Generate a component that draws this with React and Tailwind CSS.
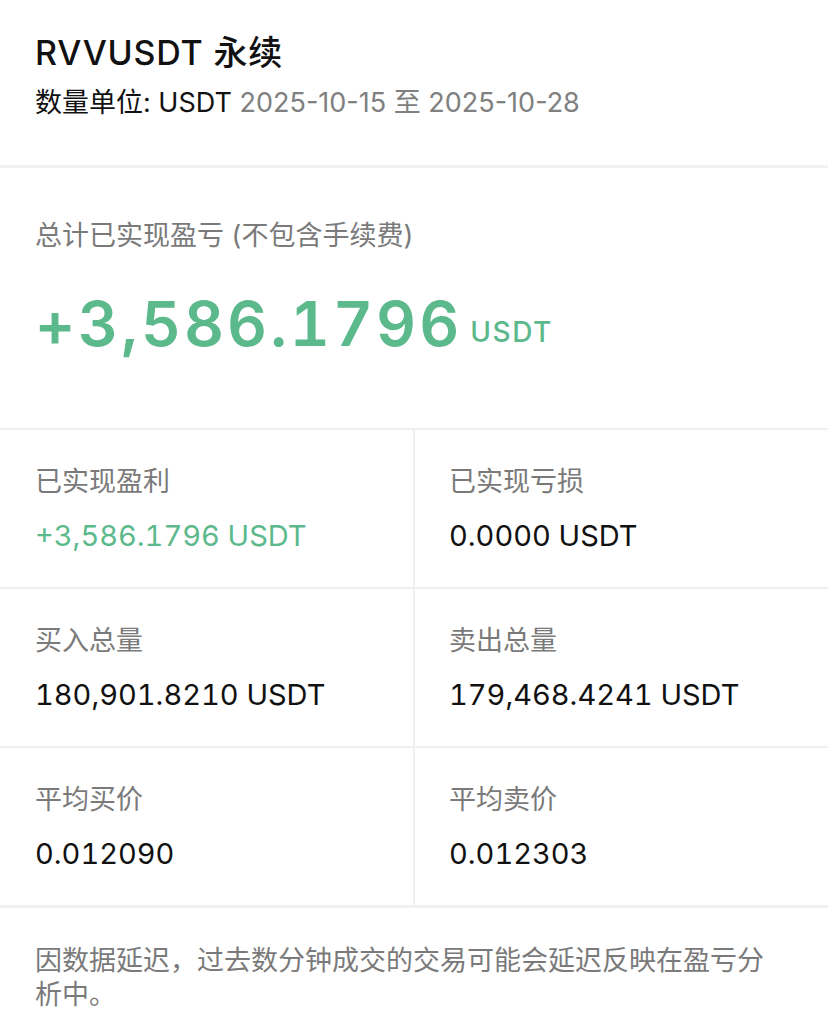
import React from "react";

const font = { fontFamily: '"Inter", "Noto Sans CJK SC", sans-serif' };

function Cell({ label, value, green, right }) {
  return (
    <div className={`h-[157px] flex flex-col pt-[35px] ${right ? "pl-[34px]" : "pl-[35px] border-r-2 border-[#f0f0f0]"}`}>
      <div className="text-[27px] leading-[34px] text-[#7a7a7a]">{label}</div>
      <div className={`mt-[19px] text-[29px] leading-[36px] tabular-nums ${green ? "text-[#5cb98c]" : "text-[#111]"}`}>{value}</div>
    </div>
  );
}

export default function App() {
  return (
    <div className="w-[828px] h-[1023px] bg-white overflow-hidden" style={font}>
      <div className="h-[168px] px-[35px] pt-[32px] border-b-[3px] border-[#f2f2f2]">
        <div className="text-[34px] leading-[42px] font-medium tracking-[0.8px] text-[#111]">RVVUSDT 永续</div>
        <div className="mt-[12px] text-[27px] leading-[34px]">
          <span className="text-[#111]">数量单位: USDT</span>
          <span className="text-[#808080]"> 2025-10-15 至 2025-10-28</span>
        </div>
      </div>
      <div className="h-[262px] px-[35px] pt-[50px] border-b-2 border-[#f0f0f0]">
        <div className="text-[27px] leading-[36px] text-[#7a7a7a]">总计已实现盈亏 (不包含手续费)</div>
        <div className="mt-[30px] flex items-baseline text-[#5cb98c]">
          <span className="text-[62px] leading-[80px] font-semibold tabular-nums tracking-[3px]">+3,586.1796</span>
          <span className="relative -top-[4px] ml-[8px] text-[28px] font-medium tracking-[1.5px]">USDT</span>
        </div>
      </div>
      <div>
        <div className="grid grid-cols-[415px_1fr] border-b-2 border-[#f0f0f0]">
          <Cell label="已实现盈利" value="+3,586.1796 USDT" green />
          <Cell label="已实现亏损" value="0.0000 USDT" right />
        </div>
        <div className="grid grid-cols-[415px_1fr] border-b-2 border-[#f0f0f0]">
          <Cell label="买入总量" value="180,901.8210 USDT" />
          <Cell label="卖出总量" value="179,468.4241 USDT" right />
        </div>
        <div className="grid grid-cols-[415px_1fr] border-b-[3px] border-[#f0f0f0]">
          <Cell label="平均买价" value="0.012090" />
          <Cell label="平均卖价" value="0.012303" right />
        </div>
      </div>
      <div className="px-[35px] pt-[36px]">
        <div className="w-[745px] text-[27px] leading-[34px] text-[#7a7a7a]">
          因数据延迟，过去数分钟成交的交易可能会延迟反映在盈亏分析中。
        </div>
      </div>
    </div>
  );
}
